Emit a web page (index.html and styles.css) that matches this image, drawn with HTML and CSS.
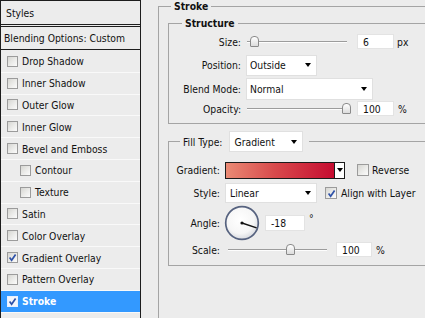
FILE: index.html
```html
<!DOCTYPE html>
<html>
<head>
<meta charset="utf-8">
<link rel="stylesheet" href="styles.css">
</head>
<body>
<div class="layer-style">
  <aside class="styles-panel">
    <div class="panel-head">Styles</div>
    <div class="panel-blend">Blending Options: Custom</div>
    <ul class="fx-list">
      <li class="fx"><span class="cb"></span>Drop Shadow</li>
      <li class="fx"><span class="cb"></span>Inner Shadow</li>
      <li class="fx"><span class="cb"></span>Outer Glow</li>
      <li class="fx"><span class="cb"></span>Inner Glow</li>
      <li class="fx"><span class="cb"></span>Bevel and Emboss</li>
      <li class="fx fx-sub"><span class="cb"></span>Contour</li>
      <li class="fx fx-sub"><span class="cb"></span>Texture</li>
      <li class="fx"><span class="cb"></span>Satin</li>
      <li class="fx"><span class="cb"></span>Color Overlay</li>
      <li class="fx"><span class="cb cb-on"><svg viewBox="0 0 9 9" class="tick"><path d="M1.6 4.6 L3.6 7.2 L7.6 1.4"/></svg></span>Gradient Overlay</li>
      <li class="fx"><span class="cb"></span>Pattern Overlay</li>
      <li class="fx fx-active"><span class="cb cb-on"><svg viewBox="0 0 9 9" class="tick"><path d="M1.6 4.6 L3.6 7.2 L7.6 1.4"/></svg></span>Stroke</li>
      <li class="fx fx-empty"></li>
    </ul>
  </aside>

  <main class="options">
    <fieldset class="group group-stroke">
      <legend class="group-title">Stroke</legend>

      <fieldset class="group group-structure">
        <legend class="group-title title-structure">Structure</legend>
        <div class="form-grid structure-grid">
          <span class="lbl">Size:</span>
          <div class="ctrl">
            <span class="slider"><span class="track" style="width:3px"></span><span class="thumb"></span><span class="track" style="width:88px"></span></span>
            <span class="field field-num">6</span><span class="unit unit-px">px</span>
          </div>

          <span class="lbl">Position:</span>
          <div class="ctrl">
            <span class="select sel-position"><span>Outside</span><span class="caret"></span></span>
          </div>

          <span class="lbl">Blend Mode:</span>
          <div class="ctrl">
            <span class="select sel-blend"><span>Normal</span><span class="caret"></span></span>
          </div>

          <span class="lbl">Opacity:</span>
          <div class="ctrl">
            <span class="slider"><span class="track" style="width:95px"></span><span class="thumb"></span></span>
            <span class="field field-num">100</span><span class="unit unit-pct">%</span>
          </div>
        </div>
      </fieldset>

      <fieldset class="group group-fill">
        <legend class="fill-legend"><span class="lbl">Fill Type:</span><span class="select sel-fill"><span>Gradient</span><span class="caret"></span></span></legend>
        <div class="form-grid fill-grid">
          <span class="lbl">Gradient:</span>
          <div class="ctrl">
            <span class="grad-pick"><span class="grad-swatch"></span><span class="grad-btn"><span class="caret"></span></span></span>
            <span class="cb cb-lg cb-reverse"></span><span class="cb-text">Reverse</span>
          </div>

          <span class="lbl">Style:</span>
          <div class="ctrl">
            <span class="select sel-style"><span>Linear</span><span class="caret"></span></span>
            <span class="cb cb-lg cb-on cb-align"><svg viewBox="0 0 9 9" class="tick"><path d="M1.6 4.6 L3.6 7.2 L7.6 1.4"/></svg></span><span class="cb-text">Align with Layer</span>
          </div>

          <span class="lbl">Angle:</span>
          <div class="ctrl">
            <svg class="dial" viewBox="0 0 36 36">
              <defs>
                <radialGradient id="dialFill" cx="45%" cy="40%" r="60%">
                  <stop offset="0" stop-color="#ffffff"/>
                  <stop offset="0.7" stop-color="#f6f6f6"/>
                  <stop offset="1" stop-color="#d9dbe0"/>
                </radialGradient>
              </defs>
              <circle cx="18" cy="18" r="16.3" fill="url(#dialFill)" stroke="#56627f" stroke-width="1.7"/>
              <line x1="18" y1="18" x2="32.6" y2="22.8" stroke="#111" stroke-width="1.4"/>
              <circle cx="18" cy="18" r="1.6" fill="#111"/>
            </svg>
            <span class="field field-angle">-18</span><span class="unit unit-deg">°</span>
          </div>

          <span class="lbl">Scale:</span>
          <div class="ctrl">
            <span class="slider slider-scale"><span class="track" style="width:58px"></span><span class="thumb"></span><span class="track" style="width:32px"></span></span>
            <span class="field field-scale">100</span><span class="unit unit-pct">%</span>
          </div>
        </div>
      </fieldset>
    </fieldset>
  </main>
</div>
</body>
</html>
```

FILE: styles.css
```css
* { box-sizing: border-box; }

html, body { margin: 0; padding: 0; }

body {
  width: 425px;
  height: 318px;
  overflow: hidden;
  background: #ececec;
  font-family: "DejaVu Sans Condensed", "DejaVu Sans", sans-serif;
  font-stretch: condensed;
  font-size: 10.3px;
  color: #111;
}

.layer-style {
  display: flex;
  height: 318px;
}

/* ---------- left styles list ---------- */
.styles-panel {
  width: 141px;
  flex: none;
  border-left: 1px solid #1d1d1d;
  border-right: 1px solid #1d1d1d;
  border-top: 1px solid #1d1d1d;
  background: #ececec;
  overflow: hidden;
}

.panel-head {
  height: 26px;
  display: flex;
  align-items: center;
  padding-left: 5px;
  border-bottom: 3px double #1d1d1d;
}

.panel-blend {
  height: 23px;
  display: flex;
  align-items: center;
  padding-left: 3px;
  border-bottom: 1px solid #1d1d1d;
}

.fx-list {
  list-style: none;
  margin: 1px 0 0;
  padding: 0;
}

.fx {
  height: 21.8px;
  display: flex;
  align-items: center;
  padding-left: 6px;
  border-bottom: 1px solid #f9f9f9;
}

.fx-sub { padding-left: 19px; }

.fx-active {
  background: #3399ff;
  color: #fff;
  font-weight: bold;
}

.cb {
  width: 11px;
  height: 11px;
  flex: none;
  margin-right: 4px;
  border: 1px solid #9b9b9b;
  background: linear-gradient(135deg, #d6d6d2 0%, #ececea 55%, #fbfbfb 100%);
  display: flex;
  align-items: center;
  justify-content: center;
}

.fx-active .cb {
  border-color: #e8f0ff;
  background: #f4f6fb;
}

.tick {
  width: 9px;
  height: 9px;
  fill: none;
  stroke: #2f52a8;
  stroke-width: 1.7;
}

/* ---------- right options ---------- */
.options {
  flex: 1;
  min-width: 0;
  display: flex;
  flex-direction: column;
}

.group {
  border: 1px solid #a4a4a4;
  border-right: none;
  min-inline-size: 0;
}

.group-stroke {
  flex: 1;
  margin: 0 0 0 17px;
  padding: 4px 0 0 9px;
  border-bottom: none;
}

.group-title {
  font-weight: bold;
  line-height: 13px;
  padding: 0 3px;
  margin-left: 3px;
}

.title-structure { margin-left: 13px; }

.group-structure {
  margin: 0;
  padding: 0 0 7px 0;
}

.group-fill {
  margin: 7px 0 0 0;
  padding: 7px 0 7px 0;
}

.fill-legend {
  display: flex;
  align-items: center;
  gap: 7px;
  margin-left: 11px;
  padding: 0 6px 0 3px;
}

.form-grid {
  display: grid;
  column-gap: 5px;
  align-items: center;
}

.structure-grid {
  grid-template-columns: 72px auto;
  grid-template-rows: 23px 24px 24px 15px;
}

.fill-grid {
  grid-template-columns: 51px auto;
  grid-template-rows: 22px 24px 36px 17px;
}

.lbl {
  text-align: right;
  white-space: nowrap;
}

.ctrl {
  display: flex;
  align-items: center;
  white-space: nowrap;
}

/* slider */
.slider {
  display: flex;
  align-items: center;
  width: 105px;
  height: 12px;
  margin-left: 1px;
}

.track {
  height: 2px;
  flex: none;
  background: linear-gradient(#9c9c9c 50%, #fdfdfd 50%);
}

.thumb {
  width: 9px;
  height: 11px;
  flex: none;
  border: 1px solid #8a8a8a;
  border-radius: 4px 4px 1px 1px;
  background: linear-gradient(#ffffff, #dcdcdc);
}

.slider-scale {
  width: 98px;
  margin-left: 3px;
}

/* text fields */
.field {
  display: flex;
  align-items: center;
  height: 15px;
  background: #fff;
  border: 1px solid #e3e3e3;
  padding-left: 5px;
}

.field-num {
  width: 37px;
  margin-left: 5px;
}

.field-angle {
  width: 40px;
  height: 16px;
  margin-left: 5px;
}

.field-scale {
  width: 36px;
  margin-left: 10px;
}

.unit { margin-left: 4px; }
.unit-px { margin-left: 3px; }
.unit-deg {
  align-self: flex-start;
  margin-top: 7px;
  margin-left: 4px;
}

/* selects */
.select {
  display: flex;
  align-items: center;
  justify-content: space-between;
  background: #fff;
  border: 1px solid #e0e0e0;
  padding: 0 5px 0 3px;
}

.caret {
  width: 0;
  height: 0;
  border-left: 3.5px solid transparent;
  border-right: 3.5px solid transparent;
  border-top: 4px solid #000;
}

.sel-position { width: 71px; height: 21px; }
.sel-blend { width: 127px; height: 22px; }
.sel-fill { width: 74px; height: 21px; padding-left: 4px; }
.sel-style { width: 92px; height: 20px; padding-left: 4px; }

/* gradient picker */
.grad-pick {
  display: flex;
  width: 120px;
  height: 17px;
  border: 1px solid #1b1b1b;
}

.grad-swatch {
  flex: 1;
  background: linear-gradient(90deg, #ea8a74 0%, #d84a4c 45%, #c60c30 100%);
}

.grad-btn {
  width: 10px;
  flex: none;
  border-left: 1px solid #1b1b1b;
  background: #fff;
  display: flex;
  align-items: center;
  justify-content: center;
}

.cb-lg {
  width: 12px;
  height: 12px;
}

.cb-reverse { margin-left: 12px; margin-right: 3px; }
.cb-align { margin-left: 8px; margin-right: 4px; }

/* angle dial */
.dial {
  width: 36px;
  height: 36px;
  margin-left: -1px;
  flex: none;
}
```
